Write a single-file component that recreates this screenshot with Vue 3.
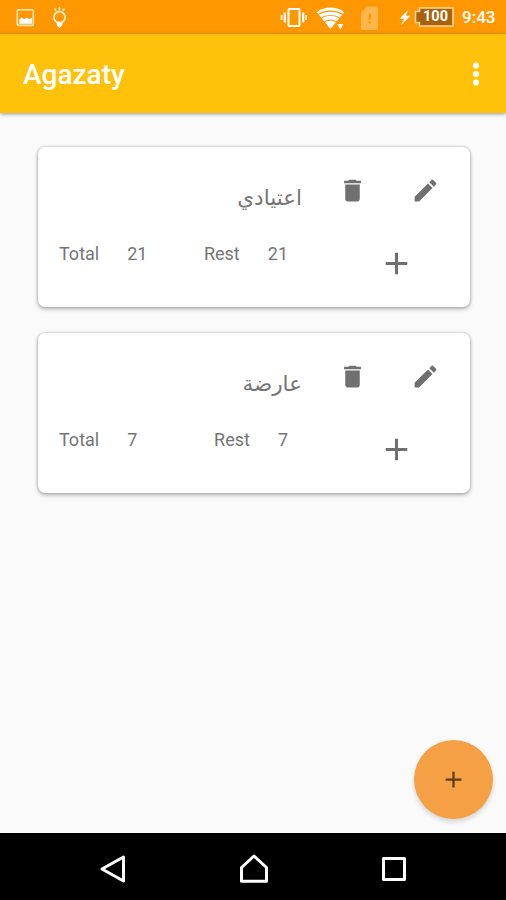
<!--
  App
  Purpose: Leave balance overview (one card per leave type) inside the phone frame.
-->

<script setup>
import { ref } from "vue";

const balances = ref([
  { id: 1, name: "اعتيادي", total: 21, rest: 21 },
  { id: 2, name: "عارضة", total: 7, rest: 7 },
]);
</script>

<template>
  <div class="screen">
    <!-- Status bar -->
    <div class="status-bar">
      <svg class="status-left" width="80" height="34" viewBox="0 0 80 34">
        <rect x="17.3" y="9.8" width="16" height="15.6" rx="1" fill="none" stroke="#ffe6c2" stroke-width="1.6" />
        <path d="M19.3 23.8v-4.300l2.500-2 2.400 1.700 2.300-1.500 2.500 1.200 2.900-1v5.900z" fill="#fff" />
        <circle cx="59.5" cy="17.3" r="5.6" fill="none" stroke="#ffefd6" stroke-width="1.7" />
        <path d="M56.2 21.800h6.600l-.8 3.800-2.500 2.400-2.500-2.400z" fill="#fff" />
        <path d="M59.5 7v3.200M54.500 8.500l1.600 2.300M64.500 8.500l-1.600 2.300" fill="none" stroke="#ffefd6" stroke-width="1.5" />
      </svg>
      <div class="status-right">
        <svg width="136" height="34" viewBox="278 0 136 34">
          <!-- Vibrate -->
          <rect x="288.500" y="9" width="11" height="17" rx="1" fill="none" stroke="#fff" stroke-width="2" />
          <path d="M284.8 12.5v10M303.2 12.5v10" stroke="#fff" stroke-width="2.200" />
          <path d="M281.6 15v5M306 15v5" stroke="#ffe6c2" stroke-width="2" />
          <!-- Wifi -->
          <path d="M316.8 12.2C324.5 6 336.500 6 344.2 12.2L330.500 29z" fill="#fff" />
          <path d="M317 15.200C325 9.800 336 9.800 344 15.200M320 18.600C326.500 14.400 334.500 14.400 341 18.600M323 22.300C328 19.500 333 19.500 338 22.300" fill="none" stroke="#ff9800" stroke-width="1.100" />
          <path d="M336.500 22.500h8v7h-8z" fill="#ff9800" />
          <path d="M337.300 24h6.200l-3.100 5.500z" fill="#fff" />
          <!-- Sim -->
          <path d="M367 6.500h8.500q2.500 0 2.500 2.500v18.500q0 2.500-2.500 2.500h-12q-2.500 0-2.500-2.500V12.500z" fill="#ffb74d" />
          <path d="M369.800 13.500v6M369.800 21.200v2.300" stroke="#ff9800" stroke-width="2.200" />
          <!-- Charging -->
          <path d="M408.500 9.500l-9 9.300h4.800l-3.600 6.700 9.800-9.700h-4.800z" fill="#fff" />
        </svg>
        <div class="battery">
          <svg class="battery-shape" width="40" height="20" viewBox="0 0 40 20">
            <path d="M5.500 1H39v18H5.500v-3.500H1.500v-11h4z" />
          </svg>
          <span class="battery-level">100</span>
        </div>
        <span class="clock">9:43</span>
      </div>
    </div>

    <!-- App bar -->
    <header class="app-bar">
      <h1 class="title">Agazaty</h1>
      <button type="button" class="icon-button" aria-label="More options">
        <svg width="8" height="24" viewBox="0 0 8 24" fill="#fff">
          <circle cx="4" cy="3.500" r="3.100" />
          <circle cx="4" cy="12" r="3.100" />
          <circle cx="4" cy="20.500" r="3.100" />
        </svg>
      </button>
    </header>

    <!-- Balances -->
    <main class="content">
      <section v-for="item in balances" :key="item.id" class="card">
        <div class="card-row card-head">
          <h2 class="name" dir="rtl">{{ item.name }}</h2>
          <button type="button" class="icon-button" aria-label="Delete">
            <svg width="29" height="29" viewBox="0 0 24 24" fill="#707070">
              <path d="M6 19c0 1.100.9 2 2 2h8c1.100 0 2-.9 2-2V7H6v12zM19 4h-3.500l-1-1h-5l-1 1H5v2h14V4z" />
            </svg>
          </button>
          <button type="button" class="icon-button edit" aria-label="Edit">
            <svg width="29" height="29" viewBox="0 0 24 24" fill="#707070">
              <path d="M3 17.250V21h3.750L17.810 9.940l-3.750-3.750L3 17.250zM20.710 7.040c.39-.39.39-1.020 0-1.410l-2.340-2.340c-.39-.39-1.020-.39-1.410 0l-1.830 1.830 3.750 3.750 1.830-1.830z" />
            </svg>
          </button>
        </div>
        <div class="card-row card-numbers">
          <div class="pair">
            <span>Total</span>
            <span>{{ item.total }}</span>
          </div>
          <div class="pair rest">
            <span>Rest</span>
            <span>{{ item.rest }}</span>
          </div>
          <button type="button" class="icon-button add" aria-label="Add">
            <svg width="37" height="37" viewBox="0 0 24 24" fill="#707070">
              <path d="M19 13h-6v6h-2v-6H5v-2h6V5h2v6h6v2z" />
            </svg>
          </button>
        </div>
      </section>

      <button type="button" class="fab" aria-label="New leave type">
        <svg width="27" height="27" viewBox="0 0 24 24" fill="#5f3c14">
          <path d="M19 13h-6v6h-2v-6H5v-2h6V5h2v6h6v2z" />
        </svg>
      </button>
    </main>

    <!-- Navigation bar -->
    <nav class="nav-bar">
      <svg width="28" height="32" viewBox="0 0 28 32">
        <path d="M3 16L24.500 4v24z" />
      </svg>
      <svg width="32" height="32" viewBox="0 0 32 32">
        <path d="M3.500 28.200V14.500L16 3l12.500 11.500v13.700z" />
      </svg>
      <svg width="28" height="32" viewBox="0 0 28 32">
        <path d="M3.500 5.500h21v21h-21z" />
      </svg>
    </nav>
  </div>
</template>

<style>
body {
  margin: 0;
  background: #fafafa;
}
</style>

<style scoped>
.screen {
  width: 506px;
  height: 900px;
  display: flex;
  flex-direction: column;
  overflow: hidden;
  background: #fafafa;
  font-family: Roboto, "Liberation Sans", sans-serif;
}

.icon-button {
  display: flex;
  margin: 0;
  padding: 0;
  border: none;
  background: none;
  cursor: pointer;
}

/* ========================
   Status Bar
======================== */

.status-bar {
  flex: none;
  height: 34px;
  display: flex;
  justify-content: space-between;
  background: #ff9800;
}

.status-right {
  display: flex;
  align-items: center;
  padding-right: 10px;
  color: #fff;
}

.battery {
  display: grid;
  place-items: center;
  width: 40px;
  height: 20px;
}

.battery-shape,
.battery-level {
  grid-area: 1 / 1;
}

.battery-shape {
  fill: #a8620c;
  stroke: #ffd79b;
  stroke-width: 1.6;
}

.battery-level {
  padding-left: 3px;
  font-size: 14.5px;
  font-weight: 700;
  line-height: 20px;
}

.clock {
  width: 34px;
  margin-left: 8px;
  font-size: 17px;
  font-weight: 500;
  white-space: nowrap;
}

/* ========================
   App Bar
======================== */

.app-bar {
  flex: none;
  box-sizing: border-box;
  height: 79px;
  padding: 0 26px 0 23px;
  display: flex;
  align-items: center;
  justify-content: space-between;
  background: #ffc10a;
  box-shadow: 0 1px 4px rgba(0, 0, 0, 0.4);
}

.title {
  margin: 3px 0 0;
  font-size: 28px;
  font-weight: 500;
  line-height: 32px;
  color: #fff;
}

/* ========================
   Cards
======================== */

.content {
  position: relative;
  flex: 1;
  padding: 34px 36px 0 38px;
  display: flex;
  flex-direction: column;
  gap: 26px;
}

.card {
  box-sizing: border-box;
  height: 160px;
  padding: 29px 29px 0 21px;
  border-radius: 7px;
  background: #fff;
  box-shadow: 0 2px 4px rgba(0, 0, 0, 0.28), 0 0 3px rgba(0, 0, 0, 0.24);
}

.card-row {
  display: flex;
  align-items: flex-start;
}

.card-head {
  height: 61px;
}

.name {
  width: 243px;
  margin: 6px 36px 0 0;
  font-family: "DejaVu Sans", sans-serif;
  font-size: 21.5px;
  font-weight: 400;
  line-height: 32px;
  color: #757575;
}

.edit {
  margin-left: 44px;
}

.card-numbers {
  font-size: 18px;
  line-height: 34px;
  color: #757575;
}

.pair {
  display: flex;
  gap: 28px;
}

.rest {
  flex: 1;
  justify-content: flex-end;
}

.add {
  margin: 8px 26px 0 90px;
}

/* ========================
   Floating Button
======================== */

.fab {
  position: absolute;
  right: 13px;
  bottom: 14px;
  width: 79px;
  height: 79px;
  padding: 0;
  display: grid;
  place-items: center;
  border: none;
  border-radius: 50%;
  background: #f5a044;
  box-shadow: 0 3px 5px rgba(0, 0, 0, 0.15);
  cursor: pointer;
}

/* ========================
   Navigation Bar
======================== */

.nav-bar {
  flex: none;
  box-sizing: border-box;
  height: 67px;
  padding: 5px 98px 0 99px;
  display: flex;
  align-items: center;
  justify-content: space-between;
  background: #000;
}

.nav-bar path {
  fill: none;
  stroke: #fff;
  stroke-width: 3;
  stroke-linejoin: round;
}
</style>
